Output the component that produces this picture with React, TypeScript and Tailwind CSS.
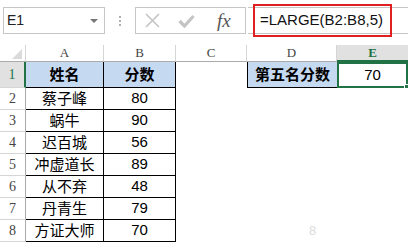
import React from 'react';

const cjk = "font-['Noto_Sans_CJK_SC',sans-serif]";
const num = "font-['Liberation_Sans',sans-serif]";
const hdr = "font-['Liberation_Serif','Noto_Sans_CJK_SC',serif]";

const rows: [string, string][] = [
  ['蔡子峰', '80'],
  ['蜗牛', '90'],
  ['迟百城', '56'],
  ['冲虚道长', '89'],
  ['从不弃', '48'],
  ['丹青生', '79'],
  ['方证大师', '70'],
];

const FormulaBar: React.FC = () => (
  <div className="h-[45px] flex items-start pt-[7px] pl-[3px]">
    {/* name box */}
    <div className="w-[102px] h-[27px] border border-[#c6c6c6] flex items-center justify-between pl-[3px] pr-[6px]">
      <span className={`${num} text-[14px] text-[#222]`}>E1</span>
      <span className="w-0 h-0 border-l-[4px] border-r-[4px] border-t-[4px] border-l-transparent border-r-transparent border-t-[#777]" />
    </div>
    <div className="w-[30px] h-[27px] flex flex-col items-center justify-center gap-[2px]">
      <span className="w-[2px] h-[2px] bg-[#b0b0b0]" />
      <span className="w-[2px] h-[2px] bg-[#b0b0b0]" />
      <span className="w-[2px] h-[2px] bg-[#b0b0b0]" />
    </div>
    {/* cancel / enter / function */}
    <div className="w-[111px] h-[27px] border border-[#c6c6c6] flex items-center pl-[9px] gap-[18px]">
      <svg width="15" height="15" viewBox="0 0 15 15">
        <path d="M1 1 L14 14 M14 1 L1 14" stroke="#c4c4c4" strokeWidth="1.6" />
      </svg>
      <svg width="17" height="14" viewBox="0 0 17 14">
        <path d="M1.5 7 L6.5 12 L15.5 2" stroke="#c4c4c4" strokeWidth="3.2" fill="none" />
      </svg>
      <span className="text-[19px] leading-none italic text-[#555] font-['Liberation_Serif',serif] ml-[4px]">fx</span>
    </div>
    {/* formula input */}
    <div className="relative flex-1 h-[27px] ml-[2px] border-t border-b border-[#c6c6c6] flex items-center pl-[12px]">
      <span className={`${num} text-[15px] text-[#111]`}>=LARGE(B2:B8,5)</span>
      <div className="absolute left-[5px] top-[-4px] w-[139px] h-[33px] border-2 border-[#e02020]" />
    </div>
  </div>
);

export default function App() {
  const colHead = `border-r border-b border-r-[#d5d5d5] border-b-[#ababab] flex items-center justify-center ${hdr} text-[13px] text-[#444]`;
  const rowHead = `border-r border-b border-r-[#ababab] border-b-[#d5d5d5] flex items-center justify-center ${hdr} text-[14px] text-[#444]`;
  const cell = 'border-r border-b border-black flex items-center justify-center';

  return (
    <div className="w-[408px] h-[243px] bg-white overflow-hidden">
      <FormulaBar />
      <div className="grid grid-cols-[26px_78px_72px_71px_90px_71px] grid-rows-[17px_26px_repeat(7,22px)]">
        {/* column headers */}
        <div className="border-r border-b border-r-[#d5d5d5] border-b-[#ababab] flex items-end justify-end pr-[3px] pb-[2px]">
          <span className="w-0 h-0 border-l-[10px] border-t-[10px] border-l-transparent border-t-transparent border-b-0 border-r-[0px] [border-bottom:10px_solid_#dadada]" />
        </div>
        <div className={colHead}>A</div>
        <div className={colHead}>B</div>
        <div className={colHead}>C</div>
        <div className={colHead}>D</div>
        <div className="bg-[#e1e1e1] border-b-2 border-b-[#217346] flex items-center justify-center font-['Liberation_Serif',serif] font-bold text-[13px] text-[#217346]">
          E
        </div>

        {/* row 1 */}
        <div className="bg-[#e1e1e1] border-r-2 border-r-[#217346] border-b border-b-[#d5d5d5] flex items-center justify-center font-['Liberation_Serif',serif] text-[14px] text-[#217346]">
          1
        </div>
        <div className={`${cell} bg-[#c5d9f1] ${cjk} font-bold text-[15px] text-black`}>姓名</div>
        <div className={`${cell} bg-[#c5d9f1] ${cjk} font-bold text-[15px] text-black`}>分数</div>
        <div />
        <div className={`border-l border-b border-black bg-[#c5d9f1] flex items-center justify-center ${cjk} font-bold text-[15px] text-black`}>
          第五名分数
        </div>
        <div className="relative border-2 border-[#217346] flex items-center justify-center">
          <span className={`${num} text-[15px] text-black`}>70</span>
          <span className="absolute right-[-3px] bottom-[-3px] w-[5px] h-[5px] bg-[#217346] border border-white" />
        </div>

        {/* data rows */}
        {rows.map(([name, score], i) => (
          <React.Fragment key={name}>
            <div className={rowHead}>{i + 2}</div>
            <div className={`${cell} ${cjk} text-[15px] text-black`}>{name}</div>
            <div className={`${cell} ${num} text-[15px] text-black`}>{score}</div>
            <div />
            <div className="flex items-center pl-[62px]">
              {i === 6 && <span className={`${num} text-[13px] text-[#dcdcdc]`}>8</span>}
            </div>
            <div />
          </React.Fragment>
        ))}
      </div>
    </div>
  );
}
